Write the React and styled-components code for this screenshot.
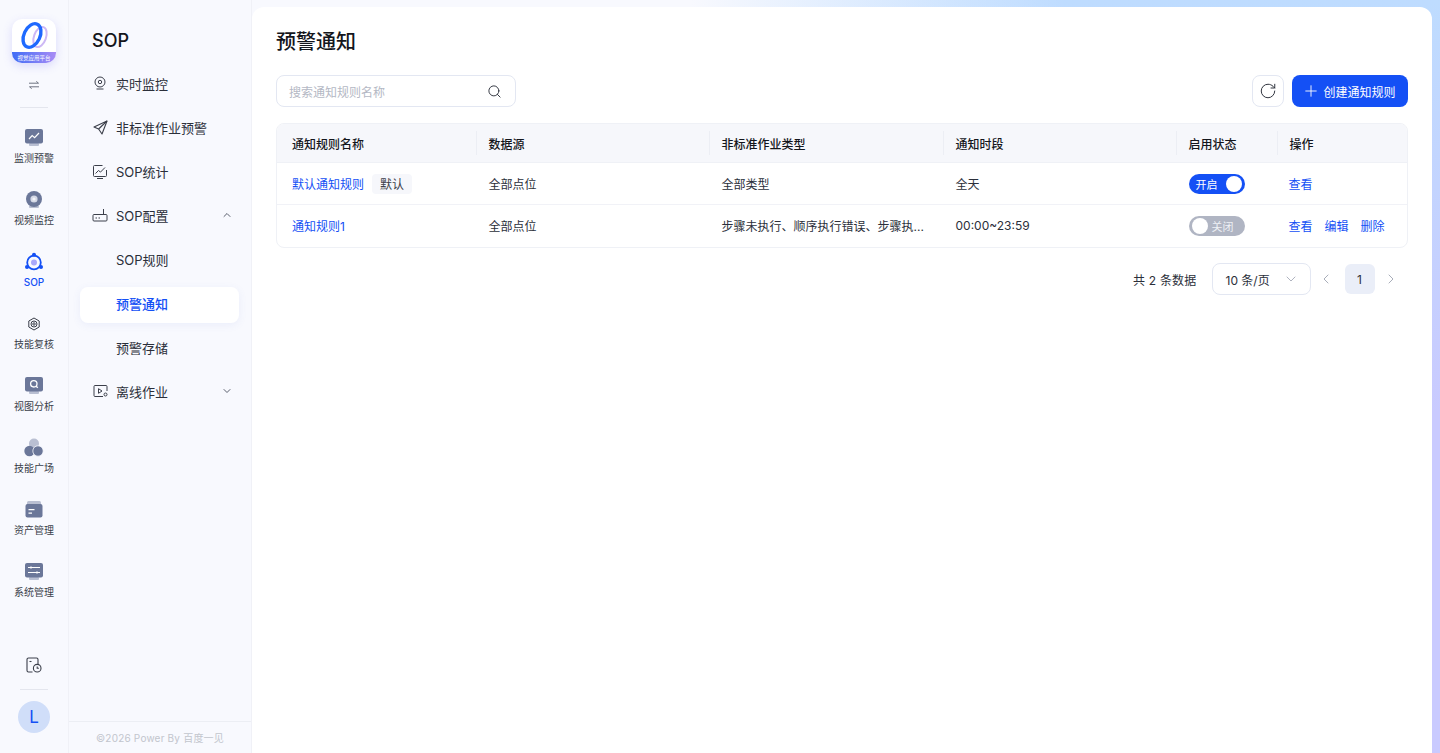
import styled, { createGlobalStyle } from 'styled-components';
import { ChevronDown, ChevronLeft, ChevronRight, ChevronUp, Plus, RotateCw, Search } from 'lucide-react';

const FONT = `Inter, 'Noto Sans CJK SC', sans-serif`;
const COLUMNS = '199px 233px 234px 233px 101px 1fr';

const GlobalStyle = createGlobalStyle`
  html, body {
    margin: 0;
    height: 100%;
    overflow: hidden;
  }
  #root {
    height: 100%;
  }
  * {
    box-sizing: border-box;
  }
`;

function LogoMark() {
  return (
    <svg width="44" height="33" viewBox="0 0 44 33" fill="none">
      <defs>
        <linearGradient id="ring" x1="12" y1="28" x2="28" y2="4">
          <stop offset="0" stopColor="#2ec5e8" />
          <stop offset="0.55" stopColor="#1f6bff" />
          <stop offset="1" stopColor="#1340f0" />
        </linearGradient>
      </defs>
      <ellipse cx="28" cy="18" rx="6" ry="10.5" transform="rotate(20 28 18)" stroke="#cdb8f5" strokeWidth="2" />
      <ellipse cx="20" cy="16.5" rx="8" ry="12.5" transform="rotate(25 20 16.5)" stroke="url(#ring)" strokeWidth="3.4" />
    </svg>
  );
}

function SwapIcon() {
  return (
    <svg width="12" height="12" viewBox="0 0 12 12" fill="none" stroke="#6f7482" strokeWidth="1">
      <path d="M1 4.2h9.5L8.3 2.4" />
      <path d="M11 7.8H1.5l2.2 1.8" />
    </svg>
  );
}

function ScreenIcon({ children }) {
  return (
    <svg width="20" height="20" viewBox="0 0 20 20" fill="none">
      <rect x="5" y="15" width="10" height="3" rx="1" fill="#b9bfd2" />
      <rect x="1" y="1" width="18" height="14.5" rx="2" fill="#6b7799" />
      {children}
    </svg>
  );
}

const railIcons = {
  monitor: (
    <ScreenIcon>
      <path d="M5 11l3.2-3.4 2.4 2L15 5" stroke="#fff" strokeWidth="1.2" />
    </ScreenIcon>
  ),
  video: (
    <svg width="20" height="20" viewBox="0 0 20 20">
      <rect x="5" y="15.5" width="10" height="2.5" rx="1" fill="#b9bfd2" />
      <circle cx="10" cy="9" r="8" fill="#6b7799" />
      <circle cx="10" cy="9" r="3.6" fill="#d5d9e6" />
      <circle cx="10" cy="9" r="1.6" fill="#f4f5fa" />
    </svg>
  ),
  sop: (
    <svg width="20" height="20" viewBox="0 0 20 20" fill="none">
      <circle cx="10" cy="10.5" r="6.8" stroke="#1450f5" strokeWidth="1.8" />
      <circle cx="10" cy="10.5" r="3" fill="#a9a8fa" />
      <circle cx="10" cy="2.8" r="2" fill="#1450f5" />
      <circle cx="3" cy="15" r="2" fill="#1450f5" />
      <circle cx="17" cy="15" r="2" fill="#1450f5" />
    </svg>
  ),
  skill: (
    <svg width="14" height="14" viewBox="0 0 14 14" fill="none" stroke="#3b3f4a" strokeWidth="1">
      <path d="M7 1l5.2 3v6L7 13l-5.2-3V4z" />
      <circle cx="7" cy="7" r="3" />
      <circle cx="7" cy="7" r="1.2" />
    </svg>
  ),
  view: (
    <ScreenIcon>
      <circle cx="9.8" cy="7.8" r="3.2" stroke="#fff" strokeWidth="1.3" />
      <path d="M12.2 10.2l1.6 1.6" stroke="#fff" strokeWidth="1.3" />
    </ScreenIcon>
  ),
  plaza: (
    <svg width="20" height="20" viewBox="0 0 20 20">
      <circle cx="10" cy="5.5" r="5" fill="#b9bfd2" />
      <circle cx="5.5" cy="13" r="5.2" fill="#6b7799" />
      <circle cx="14" cy="13" r="5.2" fill="#6b7799" stroke="#f8f9fe" strokeWidth="0.8" />
    </svg>
  ),
  asset: (
    <svg width="20" height="20" viewBox="0 0 20 20">
      <rect x="3" y="1" width="14" height="5" rx="1.5" fill="#b9bfd2" />
      <rect x="1.5" y="4" width="17" height="13.5" rx="2" fill="#6b7799" />
      <path d="M4.5 9h6v1.2h-6zM4.5 12.5h3.5v1.2H4.5z" fill="#fff" />
    </svg>
  ),
  system: (
    <ScreenIcon>
      <path d="M4 5.5h12M4 10.5h12" stroke="#fff" strokeWidth="1" />
      <path d="M7 4.4v2.2M13 9.4v2.2" stroke="#fff" strokeWidth="1.4" />
    </ScreenIcon>
  ),
};

const railItems = [
  { key: 'monitor', label: '监测预警' },
  { key: 'video', label: '视频监控' },
  { key: 'sop', label: 'SOP', active: true },
  { key: 'skill', label: '技能复核' },
  { key: 'view', label: '视图分析' },
  { key: 'plaza', label: '技能广场' },
  { key: 'asset', label: '资产管理' },
  { key: 'system', label: '系统管理' },
];

function CameraIcon() {
  return (
    <svg width="14" height="14" viewBox="0 0 14 14" fill="none" stroke="#3b3f4a" strokeWidth="1">
      <circle cx="7" cy="6" r="5" />
      <circle cx="7" cy="6" r="1.7" />
      <path d="M3.5 13h7" />
    </svg>
  );
}

function PlaneIcon() {
  return (
    <svg width="15" height="15" viewBox="0 0 15 15" fill="none" stroke="#3b3f4a" strokeWidth="1.1" strokeLinejoin="round">
      <path d="M14 1L1 7l4.6 2L9 14z" />
      <path d="M14 1L5.6 9" />
    </svg>
  );
}

function ChartIcon() {
  return (
    <svg width="16" height="15" viewBox="0 0 16 15" fill="none" stroke="#3b3f4a" strokeWidth="1">
      <path d="M14.5 6v5.5a1 1 0 0 1-1 1h-11a1 1 0 0 1-1-1v-9a1 1 0 0 1 1-1h8" />
      <path d="M3.5 9.5l3-3 2 1.6L13 3.5" />
      <path d="M5 14.5h6" />
    </svg>
  );
}

function RouterIcon() {
  return (
    <svg width="16" height="14" viewBox="0 0 16 14" fill="none" stroke="#3b3f4a" strokeWidth="1">
      <rect x="1" y="6.5" width="14" height="6.5" rx="1" />
      <path d="M11.5 6.5V1M3.5 10h1.5M6.5 10H8" />
    </svg>
  );
}

function PlayBoxIcon() {
  return (
    <svg width="15" height="14" viewBox="0 0 15 14" fill="none" stroke="#3b3f4a" strokeWidth="1">
      <path d="M14 7V2.5a1 1 0 0 0-1-1H2a1 1 0 0 0-1 1v9a1 1 0 0 0 1 1h8" />
      <path d="M5.5 4.7v4.6L9 7z" />
      <circle cx="12.5" cy="10.5" r="1.5" />
    </svg>
  );
}

function ClockFileIcon() {
  return (
    <svg width="16" height="16" viewBox="0 0 16 16" fill="none" stroke="#3b3f4a" strokeWidth="1.1">
      <path d="M6.5 15H2.5a1.5 1.5 0 0 1-1.5-1.5v-11A1.5 1.5 0 0 1 2.5 1h8A1.5 1.5 0 0 1 12 2.5V7" />
      <path d="M3.5 4.5h2" />
      <circle cx="11.2" cy="11.2" r="3.8" />
      <path d="M11.2 9.4v1.9h1.7" />
    </svg>
  );
}

const rows = [
  {
    name: '默认通知规则',
    isDefault: true,
    source: '全部点位',
    type: '全部类型',
    period: '全天',
    enabled: true,
    actions: ['查看'],
  },
  {
    name: '通知规则1',
    source: '全部点位',
    type: '步骤未执行、顺序执行错误、步骤执...',
    period: '00:00~23:59',
    enabled: false,
    actions: ['查看', '编辑', '删除'],
  },
];

const headers = ['通知规则名称', '数据源', '非标准作业类型', '通知时段', '启用状态', '操作'];

export default function App() {
  return (
    <Page>
      <GlobalStyle />
      <Rail>
        <LogoCard>
          <LogoMark />
          <LogoBand>视觉应用平台</LogoBand>
        </LogoCard>
        <SwapButton>
          <SwapIcon />
        </SwapButton>
        <RailLine />
        <RailList>
          {railItems.map((item) => (
            <RailItem key={item.key} $active={item.active}>
              <RailIconBox>{railIcons[item.key]}</RailIconBox>
              {item.label}
            </RailItem>
          ))}
        </RailList>
        <RailBottom>
          <ClockFileIcon />
          <BottomLine />
          <Avatar>L</Avatar>
        </RailBottom>
      </Rail>

      <SideNav>
        <SideTitle>SOP</SideTitle>
        <SideList>
          <SideItem><SideIcon><CameraIcon /></SideIcon>实时监控</SideItem>
          <SideItem><SideIcon><PlaneIcon /></SideIcon>非标准作业预警</SideItem>
          <SideItem><SideIcon><ChartIcon /></SideIcon>SOP统计</SideItem>
          <SideItem>
            <SideIcon><RouterIcon /></SideIcon>SOP配置
            <SideArrow><ChevronUp size={12} /></SideArrow>
          </SideItem>
          <SideItem>SOP规则</SideItem>
          <ActiveItem>预警通知</ActiveItem>
          <SideItem>预警存储</SideItem>
          <SideItem>
            <SideIcon><PlayBoxIcon /></SideIcon>离线作业
            <SideArrow><ChevronDown size={12} /></SideArrow>
          </SideItem>
        </SideList>
        <SideFooter>©2026 Power By 百度一见</SideFooter>
      </SideNav>

      <Main>
        <PageTitle>预警通知</PageTitle>
        <Toolbar>
          <SearchBox>
            <SearchText>搜索通知规则名称</SearchText>
            <Search size={15} color="#2b2f3a" strokeWidth={1.5} />
          </SearchBox>
          <ToolActions>
            <IconButton><RotateCw size={18} color="#2b2f3a" strokeWidth={1.3} /></IconButton>
            <PrimaryButton><Plus size={18} strokeWidth={1.2} />创建通知规则</PrimaryButton>
          </ToolActions>
        </Toolbar>

        <Table>
          <HeadRow>
            {headers.map((h, i) => (
              <HeadCell key={h} $first={i === 0}>{h}</HeadCell>
            ))}
          </HeadRow>
          {rows.map((row) => (
            <Row key={row.name}>
              <Cell $first>
                <LinkText>{row.name}</LinkText>
                {row.isDefault && <DefaultTag>默认</DefaultTag>}
              </Cell>
              <Cell>{row.source}</Cell>
              <Cell>{row.type}</Cell>
              <Cell>{row.period}</Cell>
              <Cell>
                <Toggle $on={row.enabled}>
                  {row.enabled ? '开启' : '关闭'}
                  <Knob $on={row.enabled} />
                </Toggle>
              </Cell>
              <ActionCell>
                {row.actions.map((a) => (
                  <LinkText key={a}>{a}</LinkText>
                ))}
              </ActionCell>
            </Row>
          ))}
        </Table>

        <Pager>
          <Total>共 2 条数据</Total>
          <PageSize>
            10 条/页
            <ChevronDown size={16} color="#9aa0ae" strokeWidth={1.2} />
          </PageSize>
          <PagerArrow><ChevronLeft size={16} strokeWidth={1.3} /></PagerArrow>
          <PageNumber>1</PageNumber>
          <PagerArrow><ChevronRight size={16} strokeWidth={1.3} /></PagerArrow>
        </Pager>
      </Main>
    </Page>
  );
}

const Page = styled.div`
  display: flex;
  height: 753px;
  font-family: ${FONT};
  color: #23262f;
  background:
    linear-gradient(90deg, #f8f9fe 48%, rgba(248, 249, 254, 0) 74%),
    linear-gradient(180deg, #bedcff, #c9caff 55%);
`;

const Rail = styled.aside`
  flex: 0 0 69px;
  display: flex;
  flex-direction: column;
  align-items: center;
  padding-top: 19px;
  background: #f8f9fe;
  border-right: 1px solid #f0f1f7;
`;

const LogoCard = styled.div`
  width: 44px;
  height: 44px;
  display: flex;
  flex-direction: column;
  border-radius: 10px;
  overflow: hidden;
  background: #fff;
  box-shadow: 0 3px 10px rgba(112, 110, 240, 0.22);
`;

const LogoBand = styled.div`
  height: 11px;
  display: flex;
  align-items: center;
  justify-content: center;
  font-size: 5.5px;
  white-space: nowrap;
  color: #fff;
  background: linear-gradient(90deg, #3f6cf6, #a98cf5);
`;

const SwapButton = styled.div`
  height: 12px;
  margin-top: 16px;
  display: flex;
`;

const RailLine = styled.div`
  width: 28px;
  height: 1px;
  margin-top: 16px;
  background: #e4e6ee;
`;

const RailList = styled.nav`
  margin-top: 18px;
  display: flex;
  flex-direction: column;
  gap: 20px;
`;

const RailItem = styled.div`
  height: 42px;
  display: flex;
  flex-direction: column;
  align-items: center;
  gap: 2px;
  font-size: 10px;
  line-height: 12px;
  font-weight: ${(p) => (p.$active ? 500 : 400)};
  color: ${(p) => (p.$active ? '#1450f5' : '#3b3f4a')};
`;

const RailIconBox = styled.div`
  width: 20px;
  height: 24px;
  display: flex;
  align-items: center;
  justify-content: center;
`;

const RailBottom = styled.div`
  margin-top: auto;
  padding-bottom: 20px;
  display: flex;
  flex-direction: column;
  align-items: center;
`;

const BottomLine = styled.div`
  width: 28px;
  height: 1px;
  margin: 16px 0 11px;
  background: #e4e6ee;
`;

const Avatar = styled.div`
  width: 32px;
  height: 32px;
  display: flex;
  align-items: center;
  justify-content: center;
  border-radius: 50%;
  font-size: 17px;
  color: #1450f5;
  background: #d0def9;
`;

const SideNav = styled.aside`
  flex: 0 0 183px;
  display: flex;
  flex-direction: column;
  background: #f8f9fe;
  border-right: 1px solid #f0f1f7;
`;

const SideTitle = styled.h2`
  margin: 30px 0 0 23px;
  font-size: 18px;
  line-height: 22px;
  font-weight: 500;
  color: #14161c;
`;

const SideList = styled.div`
  margin-top: 15px;
  padding: 0 12px 0 11px;
  display: flex;
  flex-direction: column;
  gap: 8px;
`;

const SideItem = styled.div`
  height: 36px;
  display: flex;
  align-items: center;
  padding: 0 0 4px 36px;
  position: relative;
  font-size: 13px;
  color: #2b2f3a;
`;

const ActiveItem = styled(SideItem)`
  border-radius: 8px;
  font-weight: 500;
  color: #1450f5;
  background: #fff;
  box-shadow: 0 2px 8px rgba(80, 100, 200, 0.08);
`;

const SideIcon = styled.span`
  position: absolute;
  left: 12px;
  width: 16px;
  display: flex;
  justify-content: center;
  color: #3b3f4a;
`;

const SideArrow = styled.span`
  margin-left: auto;
  margin-right: 6px;
  display: flex;
  color: #5b606e;
`;

const SideFooter = styled.footer`
  margin-top: auto;
  height: 32px;
  display: flex;
  align-items: center;
  justify-content: center;
  border-top: 1px solid #eceef4;
  font-size: 10px;
  letter-spacing: 0.2px;
  color: #c2c5cd;
`;

const Main = styled.main`
  flex: 1;
  margin: 7px 8px 0 0;
  padding: 22px 24.5px 0 24px;
  border-radius: 12px 12px 0 0;
  background: #fff;
`;

const PageTitle = styled.h1`
  margin: 0;
  font-size: 20px;
  line-height: 26px;
  font-weight: 500;
  color: #14161c;
`;

const Toolbar = styled.div`
  margin-top: 20px;
  display: flex;
  justify-content: space-between;
`;

const SearchBox = styled.div`
  width: 240px;
  height: 32px;
  padding: 0 13px 0 12px;
  display: flex;
  align-items: center;
  justify-content: space-between;
  border: 1px solid #e3e7f2;
  border-radius: 8px;
`;

const SearchText = styled.span`
  font-size: 12px;
  color: #b4b8c4;
`;

const ToolActions = styled.div`
  display: flex;
  gap: 8px;
`;

const IconButton = styled.div`
  width: 32px;
  height: 32px;
  display: flex;
  align-items: center;
  justify-content: center;
  border: 1px solid #e3e7f2;
  border-radius: 8px;
`;

const PrimaryButton = styled.div`
  width: 116px;
  height: 32px;
  padding-left: 10px;
  display: flex;
  align-items: center;
  gap: 4px;
  border-radius: 8px;
  font-size: 12px;
  color: #fff;
  background: #1450f5;
`;

const Table = styled.div`
  margin-top: 16px;
  border: 1px solid #eff1f6;
  border-radius: 8px;
  overflow: hidden;
`;

const HeadRow = styled.div`
  display: grid;
  grid-template-columns: ${COLUMNS};
  height: 39px;
  align-items: center;
  background: #f6f7fb;
  border-bottom: 1px solid #eff1f6;
`;

const HeadCell = styled.div`
  height: 24px;
  display: flex;
  align-items: center;
  padding-left: ${(p) => (p.$first ? '15px' : '11.5px')};
  border-left: ${(p) => (p.$first ? 'none' : '1px solid #eceef4')};
  font-size: 12px;
  font-weight: 500;
  color: #14161c;
`;

const Row = styled.div`
  display: grid;
  grid-template-columns: ${COLUMNS};
  height: 42px;
  align-items: center;
  border-bottom: 1px solid #f1f2f7;
  &:last-child {
    padding-bottom: 1px;
    border-bottom: none;
  }
`;

const Cell = styled.div`
  display: flex;
  align-items: center;
  min-width: 0;
  padding-left: ${(p) => (p.$first ? '15px' : '12.5px')};
  font-size: 12px;
  color: #2b2f3a;
`;

const ActionCell = styled(Cell)`
  gap: 12px;
  padding-left: 11.5px;
`;

const LinkText = styled.span`
  color: #1450f5;
`;

const DefaultTag = styled.span`
  margin-left: 8px;
  width: 40px;
  height: 20px;
  display: flex;
  align-items: center;
  justify-content: center;
  border-radius: 4px;
  color: #3b3f4a;
  background: #f6f7fb;
`;

const Toggle = styled.div`
  width: 56px;
  height: 20px;
  position: relative;
  display: flex;
  align-items: center;
  padding: ${(p) => (p.$on ? '0 0 0 7px' : '0 0 0 23px')};
  border-radius: 10px;
  font-size: 11px;
  color: ${(p) => (p.$on ? '#fff' : '#eef0f5')};
  background: ${(p) => (p.$on ? '#1450f5' : '#b0b5c3')};
`;

const Knob = styled.span`
  position: absolute;
  top: 2px;
  left: ${(p) => (p.$on ? '37px' : '3px')};
  width: 16px;
  height: 16px;
  border-radius: 50%;
  background: #fff;
`;

const Pager = styled.div`
  margin-top: 15px;
  display: flex;
  align-items: center;
  justify-content: flex-end;
  font-size: 12px;
  color: #2b2f3a;
`;

const Total = styled.span`
  margin-right: 15px;
  letter-spacing: 0.2px;
`;

const PageSize = styled.div`
  width: 99px;
  height: 32px;
  margin-right: 7px;
  padding: 0 11px 0 13px;
  display: flex;
  align-items: center;
  justify-content: space-between;
  border: 1px solid #e3e7f2;
  border-radius: 8px;
`;

const PagerArrow = styled.div`
  width: 17px;
  height: 30px;
  margin: 0 8px 0 0;
  display: flex;
  align-items: center;
  justify-content: center;
  color: #9aa0ae;
  &:last-child {
    margin: 0 8px;
  }
`;

const PageNumber = styled.div`
  width: 30px;
  height: 30px;
  margin-left: 2px;
  display: flex;
  align-items: center;
  justify-content: center;
  border-radius: 6px;
  background: #eaeef8;
`;
